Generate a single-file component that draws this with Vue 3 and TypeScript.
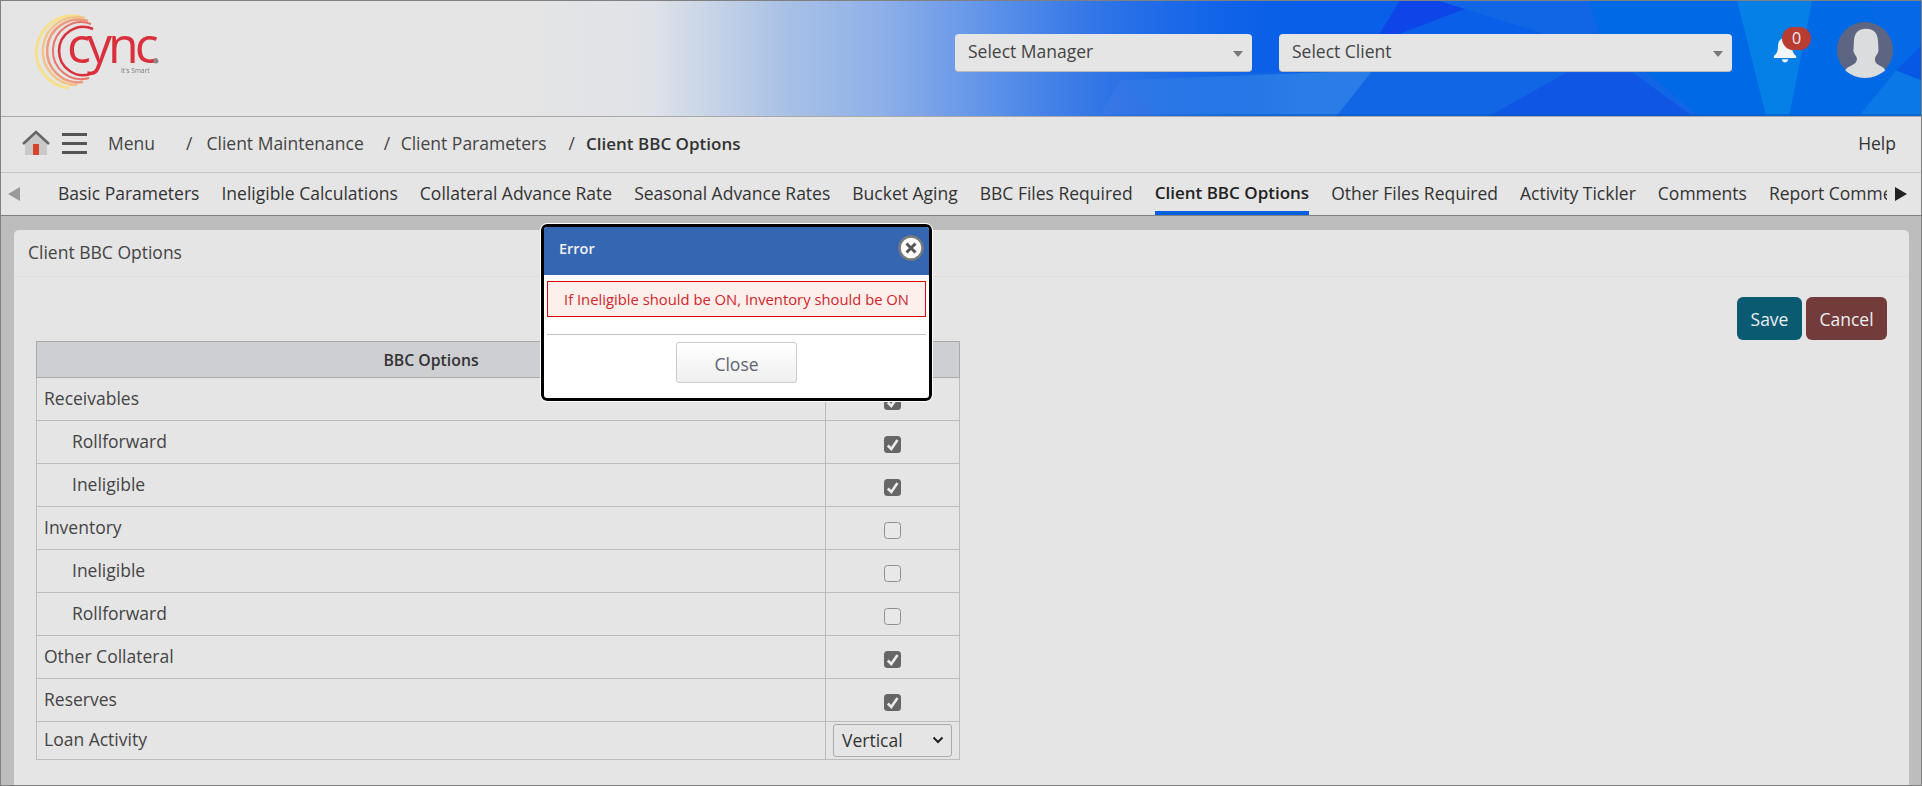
<script setup lang="ts">
interface Row { label: string; indent: boolean; checked: boolean }
const tabs: string[] = ['Basic Parameters','Ineligible Calculations','Collateral Advance Rate','Seasonal Advance Rates','Bucket Aging','BBC Files Required','Client BBC Options','Other Files Required','Activity Tickler','Comments','Report Comments']
const rows: Row[] = [
  { label: 'Receivables', indent: false, checked: true },
  { label: 'Rollforward', indent: true, checked: true },
  { label: 'Ineligible', indent: true, checked: true },
  { label: 'Inventory', indent: false, checked: false },
  { label: 'Ineligible', indent: true, checked: false },
  { label: 'Rollforward', indent: true, checked: false },
  { label: 'Other Collateral', indent: false, checked: true },
  { label: 'Reserves', indent: false, checked: true },
]
</script>

<template>
  <div class="page">
    <header class="top">
      <svg class="top-bg" viewBox="0 0 1922 116" preserveAspectRatio="none" aria-hidden="true">
        <defs>
          <linearGradient id="fade" x1="0" x2="1" y1="0" y2="0">
            <stop offset="0" stop-color="#e5e5e5" stop-opacity="1" />
            <stop offset="0.27" stop-color="#e5e5e5" stop-opacity="1" />
            <stop offset="0.34" stop-color="#dfe2e8" stop-opacity="1" />
            <stop offset="0.408" stop-color="#a9c1e5" stop-opacity="1" />
            <stop offset="0.458" stop-color="#8fb0e8" stop-opacity="1" />
            <stop offset="0.52" stop-color="#5a90e8" stop-opacity="1" />
            <stop offset="0.572" stop-color="#3878e6" stop-opacity="0.85" />
            <stop offset="0.624" stop-color="#2570e8" stop-opacity="0.45" />
            <stop offset="0.676" stop-color="#0e62e8" stop-opacity="0" />
          </linearGradient>
        </defs>
        <rect width="1922" height="116" fill="#006ae6" />
        <polygon points="1000,0 1590,0 1600,33 1700,116 1000,116" fill="#1066e4" />
        <polygon points="1000,0 1440,0 1465,8 1545,33 1400,33 1300,72 1000,72" fill="#0a5fe8" />
        <polygon points="1400,0 1440,0 1465,8 1400,33 1380,33" fill="#0d45e8" />
        <polygon points="1120,80 1373,70 1337,116 1153,116" fill="#2a7ce6" />
        <polygon points="1120,80 1153,116 1100,116" fill="#3a72e2" />
        <polygon points="1567,72 1633,72 1693,116 1490,116" fill="#1056e4" />
        <polygon points="1600,0 1677,0 1630,33 1600,33" fill="#006ae6" />
        <polygon points="1738,0 1813,0 1790,116 1767,116" fill="#0480e6" />
        <polygon points="1867,0 1922,0 1922,45 1897,70" fill="#0568e6" />
        <polygon points="1897,70 1922,45 1922,80" fill="#0858e6" />
        <polygon points="1897,70 1922,80 1922,116 1860,116" fill="#0a78e6" />
        <rect y="114" width="1922" height="2" fill="#0a5ac8" opacity="0.6" />
        <rect width="1922" height="116" fill="url(#fade)" />
      </svg>
      <div class="logo">
        <svg viewBox="0 0 140 80" width="140" height="80" aria-hidden="true">
          <g transform="translate(4 1)">
            <path d="M48 3 A36.1 36.1 0 1 0 36 74" fill="none" stroke="#f5e08e" stroke-width="3" />
            <path d="M52 4 A34 34 0 1 0 44 71" fill="none" stroke="#f2c488" stroke-width="2.5" />
            <path d="M55 7 A31.4 31.4 0 1 0 50 68" fill="none" stroke="#ee9a7c" stroke-width="2.5" />
            <path d="M58 10 A28.4 28.4 0 1 0 56 64" fill="none" stroke="#e8756a" stroke-width="2" />
            <path d="M60 15 A24.1 24.1 0 1 0 60 59" fill="none" stroke="#d9303c" stroke-width="2.5" />
          </g>
          <text x="38" y="50" class="logo-word">cync</text>
          <circle cx="127" cy="48" r="2.5" fill="#888" />
          <text x="92" y="60" class="logo-tag">It's Smart</text>
        </svg>
      </div>
      <div class="top-right">
        <div class="sel manager"><span>Select Manager</span><i class="caret"></i></div>
        <div class="sel client"><span>Select Client</span><i class="caret"></i></div>
        <div class="bell">
          <svg viewBox="0 0 26 28" width="26" height="26" aria-hidden="true">
            <path d="M13 1 C7.5 1 5.5 5 5.5 10 C5.5 16 3.5 18.5 1 20.5 L1 22.5 L25 22.5 L25 20.5 C22.5 18.5 20.5 16 20.5 10 C20.5 5 18.5 1 13 1 Z M9.5 24 C10 26.5 11.5 27.5 13 27.5 C14.5 27.5 16 26.5 16.5 24 Z" fill="#f2f4f6" />
          </svg>
          <span class="badge">0</span>
        </div>
        <svg class="avatar" viewBox="0 0 58 58" width="56" height="56" aria-hidden="true">
          <circle cx="29" cy="29" r="29" fill="#5d6583" />
          <path d="M30 7 C21 7 18 12 17.5 20 L17 30 C17.5 33 19.5 34 20.5 37 C21 41 19 43.5 13 46 C11 47 9.5 48 8.5 50 C14 55 21 58 29 58 C37 58 44 55 50 50 C49 48 48 47 46 46 C40.5 43.5 38.5 41 39.5 37 C40.5 34 42.5 33 43 30 L42.5 20 C42 12 39 7 30 7 Z" fill="#dadcdd" />
        </svg>
      </div>
    </header>

    <nav class="crumbs">
      <svg class="home" viewBox="0 0 30 26" width="30" height="26" aria-hidden="true">
        <polygon points="15,3 26,13 26,25 4,25 4,13" fill="#c9c9c9" />
        <path d="M2 14 L15 2 L28 14" fill="none" stroke="#666" stroke-width="2.5" />
        <rect x="12" y="14" width="6" height="11" fill="#d9432c" />
      </svg>
      <div class="burger"><b></b><b></b><b></b></div>
      <span class="menu">Menu</span>
      <span class="crumb first">/<em>Client Maintenance</em></span>
      <span class="crumb second">/<em>Client Parameters</em></span>
      <span class="crumb third">/<em class="strong">Client BBC Options</em></span>
      <span class="help">Help</span>
    </nav>

    <nav class="tabs">
      <span class="arrow left"></span>
      <div class="tab-list">
        <span v-for="t in tabs" :key="t" class="tab" :class="{ active: t === 'Client BBC Options' }">{{ t }}</span>
      </div>
      <span class="arrow right"></span>
    </nav>

    <main class="content">
      <section class="panel">
        <div class="panel-title">Client BBC Options</div>
        <div class="panel-body">
          <div class="actions">
            <button class="btn save">Save</button>
            <button class="btn cancel">Cancel</button>
          </div>
          <table class="grid">
            <thead>
              <tr><th>BBC Options</th><th></th></tr>
            </thead>
            <tbody>
              <tr v-for="(r, i) in rows" :key="i">
                <td :class="{ indent: r.indent }">{{ r.label }}</td>
                <td class="c"><span class="check" :class="{ on: r.checked }">
                  <svg v-if="r.checked" viewBox="0 0 17 17" width="17" height="17" aria-hidden="true"><path d="M3.8 9.5 L7.3 13 L13.5 4" fill="none" stroke="#ececec" stroke-width="2.6" /></svg>
                </span></td>
              </tr>
              <tr class="last">
                <td>Loan Activity</td>
                <td class="c">
                  <span class="dd">Vertical
                    <svg viewBox="0 0 12 8" width="12" height="8" aria-hidden="true"><path d="M1.5 1.5 L6 6 L10.5 1.5" fill="none" stroke="#222" stroke-width="2" /></svg>
                  </span>
                </td>
              </tr>
            </tbody>
          </table>
        </div>
      </section>
    </main>

    <div class="modal">
      <div class="modal-head">
        <span>Error</span>
        <span class="x">
          <svg viewBox="0 0 26 26" width="26" height="26" aria-hidden="true">
            <circle cx="13" cy="13" r="11.5" fill="#fff" stroke="#7a7a7a" stroke-width="2.5" />
            <path d="M8.5 8.5 L17.5 17.5 M17.5 8.5 L8.5 17.5" stroke="#555" stroke-width="3" />
          </svg>
        </span>
      </div>
      <div class="modal-body">
        <div class="alert">If Ineligible should be ON, Inventory should be ON</div>
        <hr />
        <button class="close">Close</button>
      </div>
    </div>
  </div>
</template>

<style>
html, body { margin: 0; background: #bdbdbd; }
</style>

<style scoped>
.page { position: relative; width: 1922px; height: 786px; overflow: hidden; box-sizing: border-box; border: 1px solid #808080; font-family: "Open Sans", "Noto Sans", sans-serif; font-size: 17.5px; color: #333; background: #bdbdbd; display: flex; flex-direction: column; }
.top { position: relative; height: 115px; flex: none; border-bottom: 1px solid #a9a9a9; display: flex; align-items: flex-start; justify-content: space-between; }
.top-bg { position: absolute; inset: 0; width: 100%; height: 100%; }
.logo { position: relative; margin: 12px 0 0 28px; height: 80px; filter: blur(0.6px); }
.logo-word { font-family: "Open Sans", sans-serif; font-size: 50px; fill: #d9303c; letter-spacing: -4px; }
.logo-tag { font-family: "Open Sans", sans-serif; font-size: 6.5px; fill: #777; }
.top-right { position: relative; display: flex; align-items: flex-start; margin: 21px 0 0 0; padding-right: 28px; }
.sel { height: 38px; box-sizing: border-box; background: #e5e5e5; border-radius: 4px; border-bottom: 1px solid #bbb; display: flex; align-items: center; justify-content: space-between; padding: 0 9px 3px 13px; color: #444; margin-top: 12px; }
.manager { width: 297px; margin-right: 27px; }
.client { width: 453px; margin-right: 40px; }
.caret { width: 0; height: 0; border-left: 5.5px solid transparent; border-right: 5.5px solid transparent; border-top: 6px solid #777; margin-top: 5px; }
.bell { position: relative; width: 26px; height: 26px; margin: 15px 39px 0 0; }
.badge { position: absolute; left: 10px; top: -10px; width: 29px; height: 23px; border-radius: 12px; background: #b83c32; color: #eee; font-size: 16px; line-height: 22px; text-align: center; }
.avatar { flex: none; }
.crumbs { height: 56px; flex: none; box-sizing: border-box; background: #e5e5e5; border-bottom: 1px solid #c6c6c6; display: flex; align-items: center; padding: 0 0 3px 20px; color: #444; }
.home { margin-right: 11px; }
.burger { width: 25px; display: flex; flex-direction: column; gap: 6px; margin-right: 21px; }
.burger b { display: block; height: 3px; background: #555; }
.menu { margin-right: 31px; }
.crumb em { font-style: normal; margin-left: 14px; }
.crumb.first { margin-right: 20px; }
.crumb.second { margin-right: 22px; }
.crumb.second em { margin-left: 10.5px; }
.crumb.third em { margin-left: 11px; }
.crumb .strong { font-weight: 600; color: #333; font-size: 17px; }
.help { margin-left: auto; margin-right: 25px; color: #333; }
.tabs { height: 43px; flex: none; box-sizing: border-box; background: #e5e5e5; border-bottom: 1px solid #7f7f7f; display: flex; align-items: stretch; position: relative; }
.arrow { width: 0; height: 0; align-self: center; border-top: 7px solid transparent; border-bottom: 7px solid transparent; }
.arrow.left { border-right: 12px solid #999; margin: 0 0 0 7px; }
.arrow.right { border-left: 12px solid #222; margin: 0 14px 0 0; }
.tab-list { flex: 1; display: flex; gap: 22px; margin-left: 38px; overflow: hidden; white-space: nowrap; margin-right: 8px; }
.tab { line-height: 40px; box-sizing: border-box; height: 42px; color: #333; flex: none; }
.tab.active { font-weight: 600; font-size: 17px; color: #222; border-bottom: 4px solid #0a5fe0; }
.content { flex: 1; padding: 14px 12px 0 13px; min-height: 0; }
.panel { background: #e5e5e5; border-radius: 5px 5px 0 0; height: 100%; }
.panel-title { height: 47px; box-sizing: border-box; line-height: 44px; padding-left: 14px; color: #444; border-bottom: 1px solid #dedede; }
.panel-body { position: relative; padding: 0 0 0 22px; }
.actions { position: absolute; top: 20px; right: 22px; display: flex; gap: 4px; }
.btn { height: 43px; border: 0; border-radius: 6px; color: #eaf0f2; font: inherit; }
.save { width: 65px; background: #0a5a72; }
.cancel { width: 81px; background: #733b39; }
.grid { position: absolute; top: 64px; left: 22px; width: 924px; border-collapse: collapse; table-layout: fixed; color: #444; }
.grid th, .grid td { border: 1px solid #bcbcbc; padding: 0; }
.grid th:first-child, .grid td:first-child { width: 788px; }
.grid th { height: 35px; background: #cecfd3; border-color: #a9a9a9; color: #333; font-weight: 600; font-size: 15.8px; }
.grid td { height: 43px; padding: 0 0 2px 7px; box-sizing: border-box; }
.grid td.indent { padding-left: 35px; }
.grid td.c { padding: 1px 0 0 0; text-align: center; }
.check { display: inline-flex; align-items: center; justify-content: center; width: 17px; height: 17px; box-sizing: border-box; border-radius: 3.5px; border: 1px solid #8f8f8f; vertical-align: middle; background: #e8e8e8; }
.check.on { background: #666; border: 0; }
.last td { height: 38px; padding-bottom: 4px; }
.grid .last td.c { padding: 0 0 1px 0; }
.dd { display: flex; align-items: center; justify-content: space-between; box-sizing: border-box; width: 119px; height: 33px; margin: 0 auto; padding: 0 7px 0 8px; border: 1px solid #aaa; border-radius: 3px; color: #333; }
.modal { position: absolute; left: 540px; top: 223px; width: 391px; height: 177px; box-sizing: border-box; background: #fff; border: 3px solid #000; outline: 1px solid #fff; border-radius: 6px; overflow: hidden; display: flex; flex-direction: column; }
.modal-head { height: 48px; flex: none; box-sizing: border-box; background: #3566b2; color: #f0f0f0; font-weight: 600; font-size: 14.5px; display: flex; justify-content: space-between; align-items: center; padding: 0 5px 6px 15px; }
.x { display: flex; }
.modal-body { padding: 6px 3px; display: flex; flex-direction: column; align-items: center; }
.alert { align-self: stretch; height: 36px; box-sizing: border-box; border: 1px solid #d00; background: #fdefec; color: #d0262a; font-size: 14.8px; line-height: 34px; text-align: center; }
hr { align-self: stretch; margin: 17px 0 7px; border: 0; border-top: 1px solid #c2c2c2; }
.close { width: 121px; height: 41px; border: 1px solid #ccc; border-radius: 3px; padding-top: 3px; background: linear-gradient(#fff, #efefef); color: #5f6470; font: inherit; }
</style>
